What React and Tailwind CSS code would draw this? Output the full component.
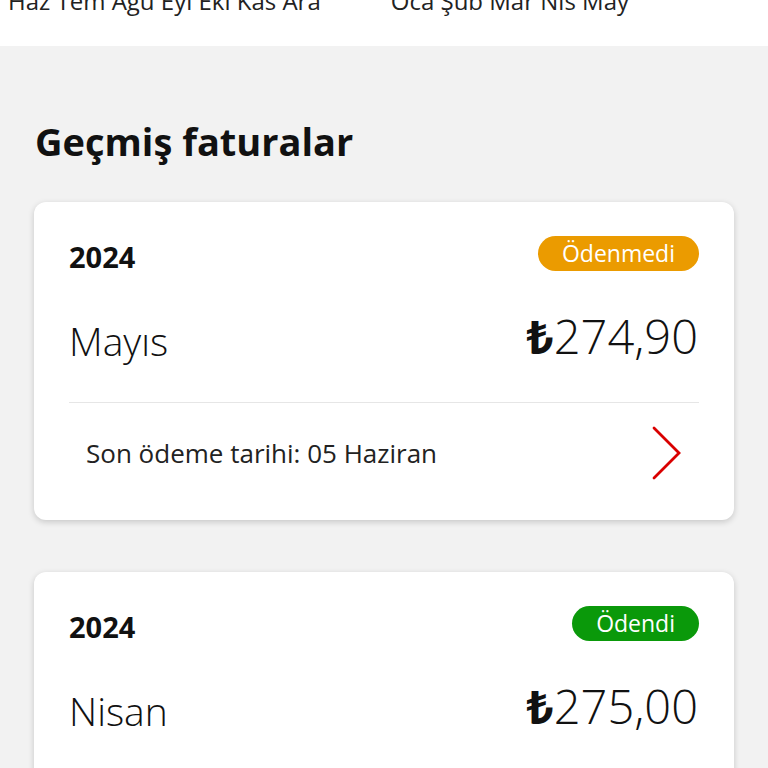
const font = { fontFamily: '"Liberation Sans Narrow", "Open Sans", "Noto Sans", sans-serif' };

const Chevron = () => (
  <svg width="30" height="54" viewBox="0 0 30 54" fill="none">
    <path d="M2 2 L27 27 L2 52" stroke="#d90000" strokeWidth="2.8" strokeLinecap="round" strokeLinejoin="miter" />
  </svg>
);

const InvoiceCard = ({ year, status, paid, month, amount, due }) => (
  <div className="bg-white rounded-xl shadow-[0_2px_6px_rgba(0,0,0,0.18)] px-[35px] pt-[34px] pb-[17px]">
    <div className="flex items-center justify-between">
      <span className="text-[29px] font-bold text-[#111] leading-none mt-[6px]">{year}</span>
      <span
        className={
          paid
            ? "h-[35px] px-[24px] rounded-full bg-[#0a990a] text-white text-[23px] leading-[35px]"
            : "h-[35px] px-[24px] rounded-full bg-[#eb9b00] text-white text-[23px] leading-[35px]"
        }
      >
        {status}
      </span>
    </div>
    <div className="flex items-end justify-between mt-[42px]">
      <span className="text-[39px] font-light text-[#111] leading-none">{month}</span>
      <span className="text-[47px] font-light text-[#111] leading-none mr-[1px]">
        <span className="font-bold">₺</span>
        {amount}
      </span>
    </div>
    {due && (
      <>
        <div className="h-px bg-[#e6e6e6] mt-[42px]" />
        <div className="flex items-center justify-between pl-[17px] pr-[17px] h-[100px]">
          <span className="text-[26px] text-[#222]">{due}</span>
          <Chevron />
        </div>
      </>
    )}
  </div>
);

export default function App() {
  return (
    <div className="w-[768px] h-[768px] overflow-hidden bg-[#f2f2f2]" style={font}>
      <div className="h-[46px] bg-white overflow-hidden">
        <div className="flex -mt-[13px] text-[24px] text-[#222] leading-[28px]">
          <span className="ml-[8px]">Haz Tem Ağu Eyl Eki Kas Ara</span>
          <span className="ml-[70px]">Oca Şub Mar Nis May</span>
        </div>
      </div>
      <div className="px-[34px]">
        <h2 className="text-[38px] font-bold text-[#111] mt-[76px] leading-none pl-[1px]">Geçmiş faturalar</h2>
        <div className="mt-[42px] flex flex-col gap-[52px]">
          <InvoiceCard
            year="2024"
            status="Ödenmedi"
            month="Mayıs"
            amount="274,90"
            due="Son ödeme tarihi: 05 Haziran"
          />
          <InvoiceCard
            year="2024"
            status="Ödendi"
            paid
            month="Nisan"
            amount="275,00"
            due="Son ödeme tarihi: 05 Mayıs"
          />
        </div>
      </div>
    </div>
  );
}
